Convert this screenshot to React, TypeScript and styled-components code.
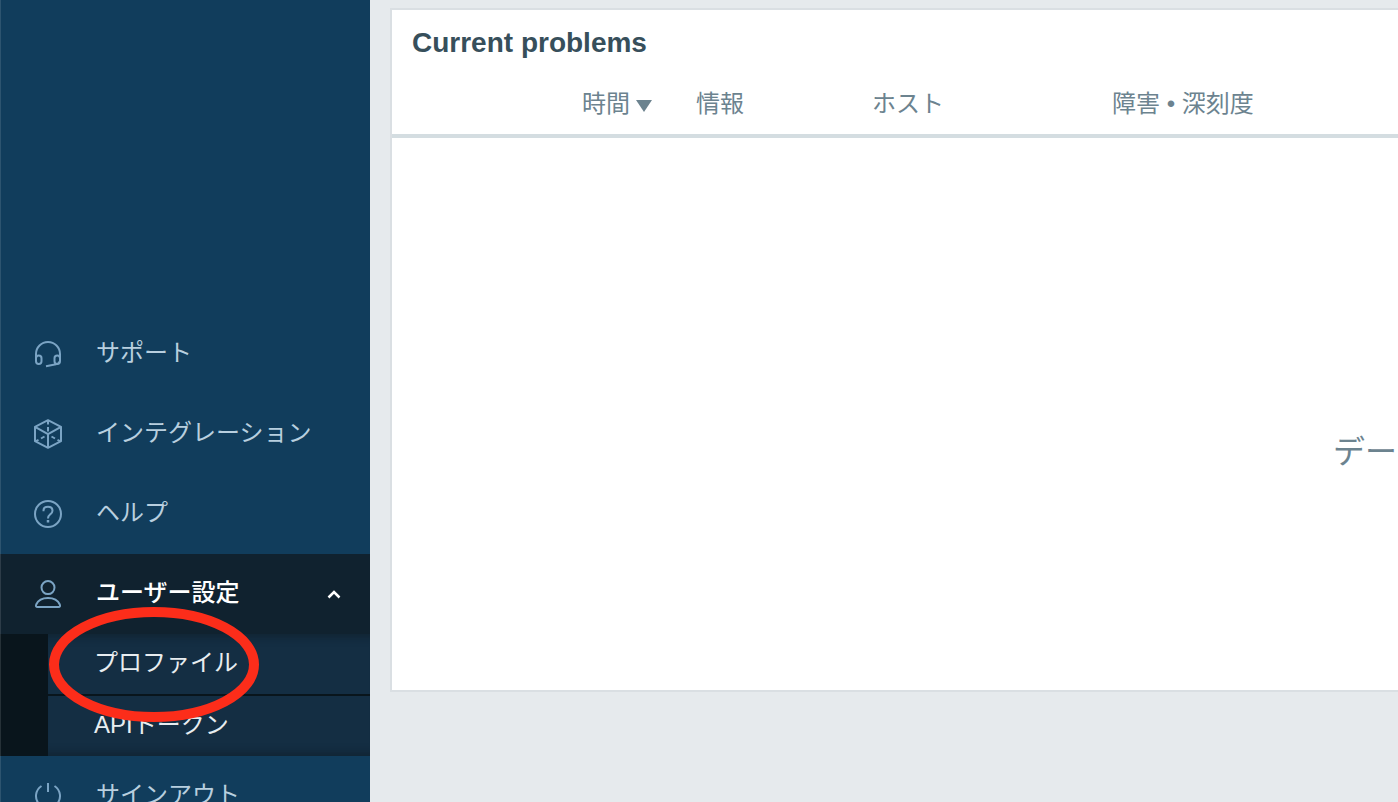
import React from 'react';
import styled, { createGlobalStyle } from 'styled-components';

const GlobalStyle = createGlobalStyle`
  * { box-sizing: border-box; }
  body {
    margin: 0;
    background: #e6eaed;
    font-family: 'Liberation Sans', 'Noto Sans CJK JP', sans-serif;
    font-size: 24px;
  }
`;

const Page = styled.div`
  display: flex;
  height: 100vh;
  overflow: hidden;
`;

const Sidebar = styled.nav`
  position: relative;
  display: flex;
  flex: 0 0 370px;
  flex-direction: column;
  justify-content: flex-end;
  background: #113d5c;

  &::after {
    content: '';
    position: absolute;
    inset: 0 auto 0 0;
    width: 1px;
    background: rgba(255, 255, 255, 0.12);
  }
`;

const Menu = styled.ul`
  list-style: none;
  margin: 0 0 -34px;
  padding: 0;
`;

const MenuLink = styled.a`
  display: flex;
  align-items: center;
  gap: 32px;
  height: 80px;
  padding: 0 26px 0 32px;
  color: #b8cfdf;
  line-height: 36px;
  text-decoration: none;
`;

const MenuButton = styled.button`
  display: flex;
  align-items: center;
  gap: 32px;
  width: 100%;
  height: 80px;
  padding: 0 26px 0 32px;
  border: 0;
  background: #10222f;
  color: #ffffff;
  font: inherit;
  font-weight: 500;
  line-height: 36px;
  text-align: left;
`;

const Label = styled.span`
  flex: 1;
  padding-bottom: 2px;
  white-space: nowrap;
`;

const Icon = styled.svg`
  flex: none;
  width: 32px;
  height: 32px;
  fill: none;
  stroke: #7ba4c4;
  stroke-width: 2;
`;

const Chevron = styled.svg`
  flex: none;
  width: 20px;
  height: 20px;
  fill: none;
  stroke: #ffffff;
  stroke-width: 2.5;
`;

const Submenu = styled.ul`
  position: relative;
  list-style: none;
  margin: 0;
  padding: 0 0 0 48px;
  background: #09151c;
`;

const SubmenuItem = styled.li`
  background: #142e43;

  &:first-child {
    box-shadow: inset 0 12px 10px -10px #10222f;
  }
  & + & {
    border-top: 2px solid #09151c;
    box-shadow: inset 0 -12px 10px -10px #10222f;
  }
`;

const SubmenuLink = styled.a`
  display: flex;
  align-items: center;
  height: 60px;
  padding: 0 0 2px 46px;
  color: #e8edf0;
  line-height: 36px;
  text-decoration: none;
`;

const Highlight = styled.svg`
  position: absolute;
  left: 48px;
  top: -28px;
  width: 212px;
  height: 118px;
  pointer-events: none;
`;

const Main = styled.main`
  flex: 1;
  min-width: 0;
  padding: 8px 0 0 20px;
`;

const Widget = styled.section`
  display: flex;
  flex-direction: column;
  min-height: 684px;
  border: 2px solid #dadfe3;
  border-right: 0;
  background: #ffffff;
`;

const Title = styled.h1`
  margin: 0;
  padding: 16px 20px 14px;
  color: #374f5b;
  font-size: 28px;
  line-height: 34px;
`;

const Problems = styled.table`
  width: 100%;
  border-collapse: collapse;
  table-layout: fixed;
`;

const Heading = styled.th<{ $width?: number; $end?: boolean }>`
  width: ${(p) => (p.$width ? `${p.$width}px` : 'auto')};
  height: 62px;
  padding: 0 22px;
  border-bottom: 4px solid #d4dde1;
  color: #6c838f;
  font-weight: 400;
  line-height: 36px;
  text-align: ${(p) => (p.$end ? 'right' : 'left')};
  white-space: nowrap;
`;

const SortArrow = styled.svg`
  width: 16px;
  height: 12px;
  margin-left: 6px;
  fill: #6c838f;
`;

const EmptyArea = styled.div`
  display: flex;
  flex: 1;
  flex-direction: column;
  justify-content: center;
  padding: 76px 1px 0 0;
`;

const Empty = styled.p`
  margin: 0;
  color: #6c838f;
  font-size: 32px;
  line-height: 48px;
  text-align: right;
`;

export default function App() {
  return (
    <Page>
      <GlobalStyle />
      <Sidebar>
        <Menu>
          <li>
            <MenuLink href="#support">
              <Icon viewBox="0 0 32 32">
                <path d="M4 22v-6a12 12 0 0 1 24 0v6" />
                <rect x="4" y="17.500" width="5.500" height="8.500" rx="2.700" />
                <rect x="22.500" y="17.500" width="5.500" height="8.500" rx="2.700" />
                <path d="M27.500 23.500q-.8 2.300-3.500 2.800L14 28.200" />
              </Icon>
              <Label>サポート</Label>
            </MenuLink>
          </li>
          <li>
            <MenuLink href="#integrations">
              <Icon viewBox="0 0 32 32" strokeLinejoin="round">
                <path d="M16 2.200 29 8.800v14.400l-13 6.600-13-6.600V8.800zM3 8.800l13 7.400 13-7.400M16 16.200v13.600" />
                <path d="M16 2.500v4M16 9v4.500M12.500 18.500l-3.500 2M6.500 21.800 3.500 23.300M19.500 18.500l3.500 2M25.500 21.800l3 1.500" />
              </Icon>
              <Label>インテグレーション</Label>
            </MenuLink>
          </li>
          <li>
            <MenuLink href="#help">
              <Icon viewBox="0 0 32 32">
                <circle cx="16" cy="16" r="13" />
                <path d="M11.500 13.200V12.500c0-2.300 1.800-3.700 4.500-3.700s4.500 1.500 4.500 3.900c0 2-1.200 2.800-2.500 3.800S16 18.300 16 20.500" />
                <path d="M16 22v2.500" strokeWidth="2.500" />
              </Icon>
              <Label>ヘルプ</Label>
            </MenuLink>
          </li>
          <li>
            <MenuButton type="button" aria-expanded="true">
              <Icon viewBox="0 0 32 32" strokeLinejoin="round">
                <circle cx="16" cy="9.600" r="6.500" />
                <path d="M5.500 29C4 29 3.600 28 4.200 26.500 6 22.500 10.500 20 16 20s10 2.500 11.800 6.500c.6 1.500.2 2.500-1.300 2.500z" />
              </Icon>
              <Label>ユーザー設定</Label>
              <Chevron viewBox="0 0 20 20">
                <path d="M4.500 13.500 10 8l5.500 5.500" />
              </Chevron>
            </MenuButton>
            <Submenu>
              <SubmenuItem>
                <SubmenuLink href="#profile">プロファイル</SubmenuLink>
              </SubmenuItem>
              <SubmenuItem>
                <SubmenuLink href="#tokens">APIトークン</SubmenuLink>
              </SubmenuItem>
              <Highlight viewBox="0 0 212 118" aria-hidden="true">
                <ellipse cx="106" cy="58.500" rx="100" ry="52.500" fill="none" stroke="#fc2d1a" strokeWidth="10" />
              </Highlight>
            </Submenu>
          </li>
          <li>
            <MenuLink href="#signout">
              <Icon viewBox="0 0 32 32">
                <path d="M16 3v9M9.500 6a12 12 0 1 0 13 0" />
              </Icon>
              <Label>サインアウト</Label>
            </MenuLink>
          </li>
        </Menu>
      </Sidebar>
      <Main>
        <Widget>
          <Title>Current problems</Title>
          <Problems>
            <thead>
              <tr>
                <Heading $width={282} $end>
                  時間
                  <SortArrow viewBox="0 0 16 12">
                    <path d="M0 0h16L8 12z" />
                  </SortArrow>
                </Heading>
                <Heading $width={176}>情報</Heading>
                <Heading $width={240}>ホスト</Heading>
                <Heading>障害 • 深刻度</Heading>
              </tr>
            </thead>
          </Problems>
          <EmptyArea>
            <Empty>デー</Empty>
          </EmptyArea>
        </Widget>
      </Main>
    </Page>
  );
}
